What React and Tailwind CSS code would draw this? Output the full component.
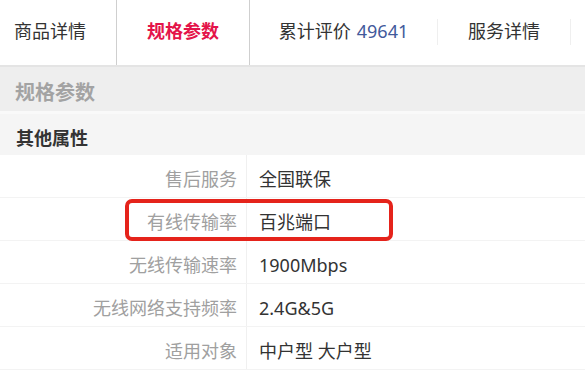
import React from "react";

const rows = [
  { label: "售后服务", value: "全国联保" },
  { label: "有线传输率", value: "百兆端口" },
  { label: "无线传输速率", value: "1900Mbps" },
  { label: "无线网络支持频率", value: "2.4G&5G" },
  { label: "适用对象", value: "中户型 大户型" },
];

const App = () => {
  return (
    <div
      className="relative w-[585px] h-[371px] overflow-hidden bg-white"
      style={{ fontFamily: "'Noto Sans','Noto Sans CJK SC',sans-serif" }}
    >
      {/* tabs */}
      <div className="flex h-[67px] border-b-2 border-[#e4e4e4] bg-white text-[18px] text-[#333]">
        <div className="flex w-[117px] items-center border-r border-[#cfcfcf] pb-[2px] pl-[14px]">
          商品详情
        </div>
        <div className="flex w-[133px] items-center justify-center border-r border-[#cfcfcf] pb-[2px] font-bold text-[#e4144a]">
          规格参数
        </div>
        <div className="flex w-[188px] items-center justify-center pb-[2px]">
          <div className="flex h-[26px] w-full items-center justify-center border-r border-[#efefef]">
            累计评价<span className="ml-[6px] text-[#41599b]">49641</span>
          </div>
        </div>
        <div className="flex w-[133px] items-center justify-center pb-[2px]">
          <div className="flex h-[26px] w-full items-center justify-center border-r border-[#efefef]">
            服务详情
          </div>
        </div>
      </div>

      {/* section header */}
      <div className="flex h-[47px] items-center border-b-[3px] border-[#f9f9f9] bg-[#eeeeee] pl-[15px] pt-[7px] text-[20px] font-bold text-[#a3a3a3]">
        规格参数
      </div>
      <div className="flex h-[41px] items-center bg-[#f5f5f5] pl-[16px] pt-[7px] text-[18px] font-bold text-[#333]">
        其他属性
      </div>

      {/* rows */}
      <div className="flex flex-col">
        {rows.map((r) => (
          <div key={r.label} className="flex h-[43px] border-b border-[#f3f3f3] text-[18px]">
            <div className="flex w-[247px] items-center justify-end border-r border-[#f0f0f0] pr-[9px] pt-[6px] text-[#a0a0a0]">
              {r.label}
            </div>
            <div className="flex items-center pl-[12px] pt-[6px] text-[#333]">{r.value}</div>
          </div>
        ))}
      </div>

      {/* annotation box */}
      <div className="absolute left-[125px] top-[199px] h-[42px] w-[268px] rounded-[7px] border-4 border-[#e5231b]" />
    </div>
  );
};

export default App;
